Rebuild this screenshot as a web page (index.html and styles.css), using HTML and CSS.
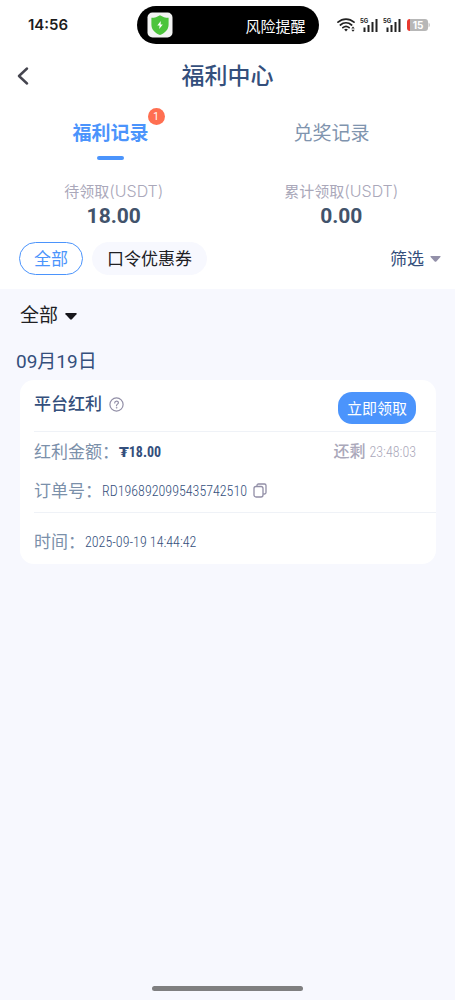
FILE: index.html
```html
<!DOCTYPE html>
<html lang="zh-CN">
<head>
<meta charset="utf-8">
<meta name="viewport" content="width=device-width, initial-scale=1">
<title>福利中心</title>
<link rel="stylesheet" href="styles.css">
</head>
<body>
<div class="page">
  <div class="top">
    <div class="status">
      <span class="clock">14:56</span>
      <div class="island">
        <svg class="shield" width="26" height="26" viewBox="0 0 26 26" aria-hidden="true">
          <rect x=".5" y=".5" width="25" height="25" rx="5" fill="#f3f4f3"/>
          <path d="M13 3.200c2.600 1.700 5.300 2.500 8.600 2.600v6.800c0 4.900-3.300 8.400-8.600 10.500-5.300-2.100-8.600-5.600-8.600-10.500V5.800C7.700 5.700 10.400 4.900 13 3.200z" fill="#4cc43c"/>
          <path d="M13.800 9l-3.500 4.400h2.300l-.4 3.600 3.600-4.500h-2.200z" fill="#fff"/>
        </svg>
        <span>风险提醒</span>
      </div>
      <div class="signals">
        <svg width="19" height="16" viewBox="0 0 19 16" fill="none" stroke="#222" stroke-width="1.700" stroke-linecap="round" aria-hidden="true">
          <path d="M1 5.200c4.700-4.200 11.300-4.200 16 0M3.400 8c3.300-3 7.900-3 11.200 0M5.900 10.700c1.900-1.600 4.300-1.600 6.200 0"/>
          <path d="M7.200 12.400c1-.9 2.600-.9 3.600 0L9 14.500z" fill="#222" stroke="none"/>
          <path d="M14.300 11.500l1.700-2 1.700 2zM14.300 12.800l1.700 2 1.700-2z" fill="#222" stroke="none"/>
        </svg>
        <svg width="19" height="16" viewBox="0 0 19 16" aria-hidden="true">
          <text class="net" x="0" y="6">5G</text>
          <path d="M3.500 10.500h2V15h-2zM7.500 8h2v7h-2zM11.500 5h2v10h-2zM15.500 2h2v13h-2z" fill="#222"/>
        </svg>
        <svg width="19" height="16" viewBox="0 0 19 16" aria-hidden="true">
          <text class="net" x="0" y="6">5G</text>
          <path d="M3.500 10.500h2V15h-2zM7.500 8h2v7h-2zM11.500 5h2v10h-2zM15.500 2h2v13h-2z" fill="#222"/>
        </svg>
        <svg width="25" height="14" viewBox="0 0 25 14" aria-hidden="true">
          <path d="M4 1h15a3 3 0 0 1 3 3v6a3 3 0 0 1-3 3H4z" fill="#b7b7b7"/>
          <path d="M4 1v12a3 3 0 0 1-3-3V4a3 3 0 0 1 3-3z" fill="#e8392e"/>
          <path d="M22.600 4.500c1.500.9 1.500 4.100 0 5z" fill="#b7b7b7"/>
          <text class="level" x="12" y="11">15</text>
        </svg>
      </div>
    </div>

    <header class="header">
      <button class="back" type="button" aria-label="返回">
        <svg width="12" height="18" viewBox="0 0 12 18" fill="none" stroke="#45454f" stroke-width="2.400" stroke-linecap="round" stroke-linejoin="round"><path d="M10 1.500L2 9l8 7.500"/></svg>
      </button>
      <h1>福利中心</h1>
    </header>

    <nav class="tabs">
      <button class="tab active" type="button"><span class="tab-label">福利记录<span class="badge">1</span></span></button>
      <button class="tab" type="button"><span class="tab-label">兑奖记录</span></button>
    </nav>

    <div class="stats">
      <div class="stat"><div class="stat-name">待领取<span>(USDT)</span></div><strong>18.00</strong></div>
      <div class="stat"><div class="stat-name">累计领取<span>(USDT)</span></div><strong>0.00</strong></div>
    </div>

    <div class="filters">
      <button class="pill selected" type="button">全部</button>
      <button class="pill" type="button">口令优惠券</button>
      <button class="filter" type="button">筛选
        <svg width="11" height="6" viewBox="0 0 11 6" aria-hidden="true"><path d="M1 0h9q1 .3.400 1L6.300 5.500q-.8.700-1.600 0L.6 1Q0 .3 1 0z" fill="#9390a9"/></svg>
      </button>
    </div>
  </div>

  <main class="records">
    <button class="kind" type="button">全部
      <svg width="12" height="7" viewBox="0 0 12 7" aria-hidden="true"><path d="M1 0h10q1.200.3.500 1.200L6.900 6.300q-.9.800-1.800 0L.5 1.200Q-.2.300 1 0z" fill="#17171c"/></svg>
    </button>
    <h2>09月19日</h2>
    <article class="card">
      <div class="card-head">
        <h3>平台红利</h3>
        <button class="icon" type="button" aria-label="说明">
          <svg width="15" height="15" viewBox="0 0 15 15" fill="none" stroke="#928fa7" stroke-width="1.200" stroke-linecap="round"><circle cx="7.500" cy="7.500" r="6.600"/><path d="M5.700 6c0-2.500 3.700-2.400 3.700-.2 0 1.300-1.900 1.400-1.900 2.900"/><circle cx="7.500" cy="10.800" r=".4" fill="#928fa7" stroke-width=".6"/></svg>
        </button>
        <button class="claim" type="button">立即领取</button>
      </div>
      <div class="card-body">
        <div class="row">
          <span class="name">红利金额：</span><b class="value">₮18.00</b>
          <span class="left">还剩 <span class="timer">23:48:03</span></span>
        </div>
        <div class="row">
          <span class="name">订单号：</span><span class="value">RD1968920995435742510</span>
          <button class="icon" type="button" aria-label="复制">
            <svg width="14" height="15" viewBox="0 0 14 15" fill="none" stroke="#928fa7" stroke-width="1.300"><rect x="1" y="3.500" width="9" height="10.500" rx="2"/><path d="M4 3.300V2.500Q4 1 5.500 1h6Q13 1 13 2.500v7q0 1.500-1.500 1.500h-1.300"/></svg>
          </button>
        </div>
      </div>
      <div class="card-foot row"><span class="name">时间：</span><span class="value">2025-09-19 14:44:42</span></div>
    </article>
  </main>
  <div class="home-bar"></div>
</div>
</body>
</html>
```

FILE: styles.css
```css
* { box-sizing: border-box; }

body {
  margin: 0;
  background: #f7f8fe;
  color: #344f7c;
  font-family: Roboto, "Noto Sans CJK SC", sans-serif;
}

button {
  padding: 0;
  border: 0;
  background: none;
  color: inherit;
  font: inherit;
  cursor: pointer;
}

h1, h2, h3 { margin: 0; font-weight: 500; }
svg { display: block; flex: none; }

.page {
  display: flex;
  flex-direction: column;
  min-height: 100vh;
}

.top { background: #fff; }

.status {
  display: grid;
  grid-template-columns: 1fr 40% 1fr;
  align-items: center;
  height: 50px;
}

.clock {
  padding-left: 28px;
  color: #1c1c1c;
  font: 600 15px/20px Inter, sans-serif;
}

.island {
  display: flex;
  align-items: center;
  justify-content: space-between;
  height: 38px;
  padding: 0 13px 0 10px;
  border-radius: 19px;
  background: #000;
  color: #fff;
  font-size: 15px;
}

.signals {
  display: flex;
  align-items: center;
  justify-content: flex-end;
  gap: 4px;
  padding-right: 24px;
}

.net { font: 700 6px Inter, sans-serif; fill: #222; }
.level { font: 700 10px Inter, sans-serif; fill: #fff; text-anchor: middle; }

.header {
  display: grid;
  grid-template-columns: 40px 1fr 40px;
  align-items: center;
  height: 52px;
}

.back { display: flex; padding: 8px 17px; }
h1 { padding-top: 2px; font-size: 23px; line-height: 32px; text-align: center; }

.tabs {
  display: grid;
  grid-template-columns: 1fr 1fr;
  height: 60px;
  padding-right: 13px;
}

.tab {
  display: flex;
  flex-direction: column;
  align-items: center;
  gap: 8px;
  padding-top: 18px;
  color: #7f94ae;
  font-size: 19px;
  line-height: 28px;
}

.tab.active { color: #4b94fc; font-weight: 700; }

.tab.active::after {
  content: "";
  width: 27px;
  height: 4px;
  border-radius: 2px;
  background: #4b94fc;
}

.tab-label { position: relative; }

.badge {
  position: absolute;
  top: -12px;
  right: -16px;
  width: 17px;
  height: 17px;
  border-radius: 50%;
  background: #ff6f51;
  color: #fff;
  font-size: 10px;
  font-weight: 400;
  line-height: 17px;
  text-align: center;
}

.stats {
  display: grid;
  grid-template-columns: 1fr 1fr;
  padding-top: 17px;
  text-align: center;
}

.stat-name { color: #aaa8ba; font-size: 15px; line-height: 24px; }
.stat-name span { font-family: Inter, sans-serif; font-size: 16px; font-weight: 300; }
.stat strong { display: block; color: #42536b; font-size: 21px; line-height: 24px; }

.filters {
  display: flex;
  align-items: center;
  gap: 9px;
  padding: 14px 14px 14px 19px;
}

.pill {
  height: 33px;
  padding: 0 14px;
  border: 1px solid #f7f8fe;
  border-radius: 17px;
  background: #f7f8fe;
  color: #202024;
  font-size: 17px;
  line-height: 24px;
}

.pill.selected { border-color: #4b94fc; background: #fff; color: #4b94fc; }

.filter {
  display: flex;
  align-items: center;
  gap: 6px;
  margin-left: auto;
  font-size: 17px;
  line-height: 24px;
}

.records { flex: 1; padding: 0 19px 24px 20px; }

.kind {
  display: flex;
  align-items: center;
  gap: 7px;
  padding-top: 13px;
  color: #202024;
  font-size: 19px;
  line-height: 28px;
}

h2 {
  margin: 17px 0 3px -4px;
  font-size: 19px;
  font-weight: 400;
  line-height: 30px;
}

.card { border-radius: 14px; background: #fff; }

.card-head {
  display: flex;
  align-items: center;
  gap: 7px;
  height: 52px;
  margin-left: 14px;
  padding-right: 20px;
  border-bottom: 1px solid #eff2f7;
}

h3 { font-size: 17px; line-height: 24px; }
.card-head h3, .card-head .icon { margin-bottom: 3px; }

.claim {
  height: 32px;
  margin-top: 4px;
  margin-left: auto;
  padding: 0 9px;
  border-radius: 14px;
  background: #4b94fc;
  color: #fff;
  font-size: 15px;
}

.card-body {
  margin-left: 14px;
  padding: 0 20px 2px 0;
  border-bottom: 1px solid #eff2f7;
}

.row { display: flex; align-items: center; height: 39px; }
.name { color: #7b90aa; font-size: 17px; line-height: 24px; }

.value, .timer {
  font-family: "Roboto Condensed", "Liberation Sans Narrow", "DejaVu Sans", sans-serif;
  font-size: 14px;
  font-weight: 300;
}

b.value { font-weight: 700; }
.row .icon { margin-left: 6px; }
.left { margin-left: auto; color: #aaa8ba; font-size: 16px; font-weight: 500; line-height: 24px; }
.card-foot { height: 51px; margin-left: 14px; padding-top: 7px; }

.home-bar {
  position: fixed;
  bottom: 9px;
  left: 33.4%;
  width: 33.3%;
  height: 5px;
  border-radius: 3px;
  background: #7f7f80;
}
```
